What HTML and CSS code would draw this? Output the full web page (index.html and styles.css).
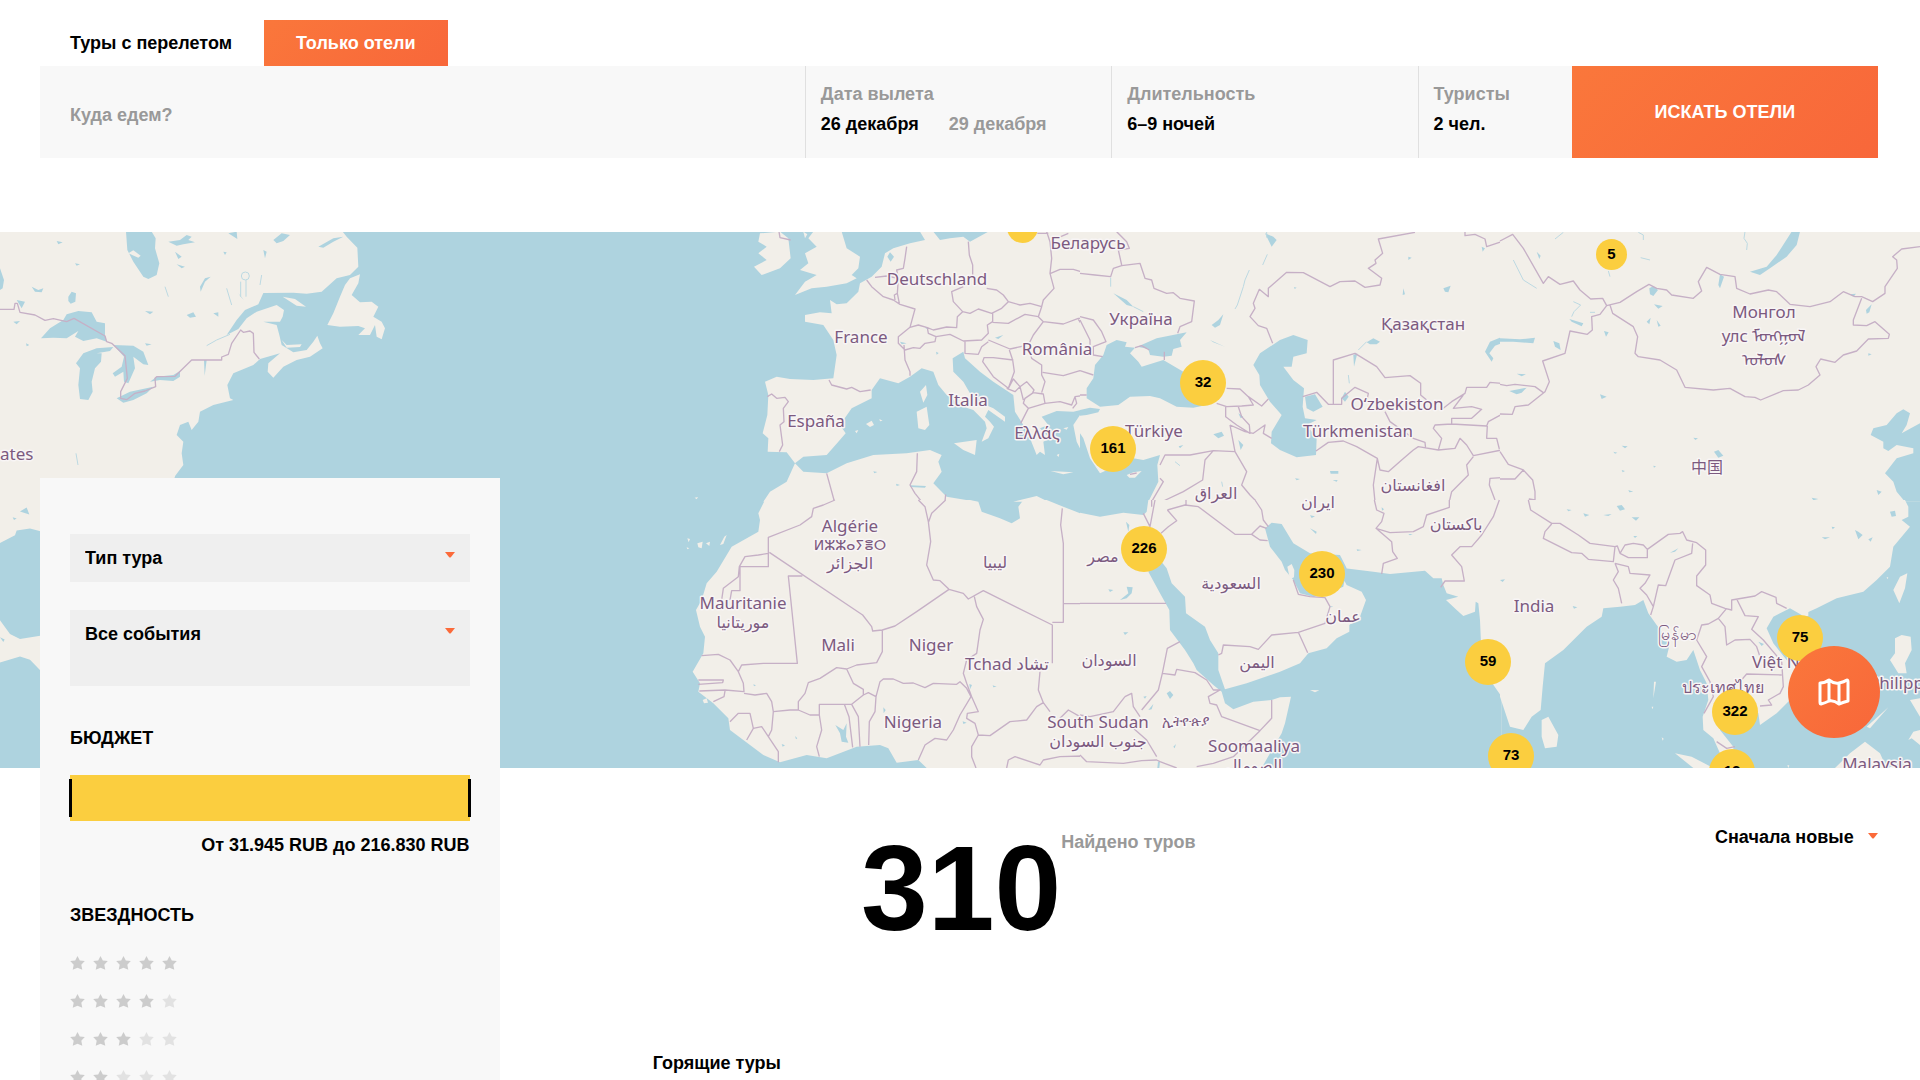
FILE: index.html
```html
<!DOCTYPE html>
<html lang="ru">
<head>
<meta charset="utf-8">
<meta name="viewport" content="width=device-width, initial-scale=1">
<title>Только отели</title>
<link rel="stylesheet" href="styles.css">
</head>
<body>
<svg class="defs" aria-hidden="true">
  <symbol id="star" viewBox="0 0 15 14" preserveAspectRatio="none"><path d="M7.5 0 9.8 4.6 14.8 5.1 11.3 8.8 12.3 13.8 7.5 11.8 2.7 13.8 3.7 8.8 .2 5.1 5.2 4.6Z"/></symbol>
  <symbol id="caret" viewBox="0 0 10 6"><path d="M0 0H10L6 5Q5 6 4 5Z"/></symbol>
</svg>

<header class="search">
  <nav class="tabs">
    <a class="tab" href="#tours">Туры с перелетом</a>
    <a class="tab tab-active" href="#hotels">Только отели</a>
  </nav>
  <form class="search-form">
    <input class="destination" type="text" placeholder="Куда едем?" aria-label="Куда едем?">
    <div class="field">
      <span class="field-label">Дата вылета</span>
      <span class="field-values"><button type="button" class="value">26 декабря</button><button type="button" class="value value-muted">29 декабря</button></span>
    </div>
    <div class="field">
      <span class="field-label">Длительность</span>
      <span class="field-values"><button type="button" class="value">6–9 ночей</button></span>
    </div>
    <div class="field">
      <span class="field-label">Туристы</span>
      <span class="field-values"><button type="button" class="value">2 чел.</button></span>
    </div>
    <button class="submit" type="submit">ИСКАТЬ ОТЕЛИ</button>
  </form>
</header>

<section class="map" aria-label="Карта">
<svg class="map-canvas" viewBox="0 0 1920 536" preserveAspectRatio="xMidYMid slice">
  <!-- North America -->
  <g transform="translate(0 -7) scale(.33333)">
    <path class="land" d="M0 20H1028L1040 35 1072 68 1075 125 1050 150 1010 160 965 200 920 206 880 203 790 204 775 238 735 255 710 285 680 330 715 312 740 280 770 260 830 240 852 255 848 275 840 290 790 290 830 300 838 330 845 360 880 382 920 375 940 350 952 332 960 355 968 370 930 395 890 405 850 425 820 458 803 440 805 415 840 385 780 402 760 420 700 445 682 480 690 520 700 525 640 540 600 560 595 590 575 615 565 590 540 600 530 630 550 650 545 685 550 720 520 760 515 780H0Z"/>
    <path class="land" d="M1080 148 1050 160 1035 180 1020 215 1000 265 982 300 1020 305 1075 303 1095 310 1075 330 1110 330 1125 300 1130 335 1145 343 1155 310 1145 290 1120 275 1135 245 1115 230 1080 232 1055 210 1075 175ZM848 215 885 222 918 245 890 242ZM845 345 860 360 905 358 900 366 860 368Z"/>
    <path class="water" d="M378 20 382 75 400 110 430 155 445 162 470 150 478 115 465 70 467 40 455 20ZM123 340 150 310 190 285 200 268 235 258 275 262 290 290 315 295 315 330 320 350 290 340 250 348 225 335 235 318 200 340 160 338ZM228 415 250 385 290 370 340 366 330 378 290 385 305 385 303 410 285 430 275 470 278 500 265 525 240 522 235 480 240 430ZM340 360 400 362 430 380 445 420 430 418 400 395 405 430 385 475 372 470 370 440 345 455 338 445 365 425 372 395ZM350 520 390 500 460 485 440 505 400 525 370 533ZM450 470 470 455 520 450 540 438 540 455 520 468 480 465ZM0 130 12 165 8 190 0 195ZM205 215 215 200 228 205 226 230 212 236 205 228ZM600 185 615 160 632 155 615 170 602 200ZM640 265 655 262 655 275ZM560 270 580 262 588 275 570 278ZM505 50 540 45 560 30 575 35 565 45 585 52 550 58 530 62ZM820 45 845 25 870 30 850 48 830 55ZM955 65 1000 40 1030 35 1000 50 970 68ZM685 25 710 20 712 42ZM525 80 545 95 535 102ZM530 118 555 125 545 130ZM435 258 460 260 450 268ZM790 75 800 80 795 100ZM170 48 188 52 175 58ZM50 225 75 230 65 250ZM40 290 60 288 50 298ZM225 115 240 118 230 122ZM95 185 115 195 130 190 125 202 105 200ZM435 355 455 358 440 362ZM78 355 88 360 80 364ZM612 405 620 405 614 452ZM670 80 680 82 675 90ZM715 205 732 225 722 215Z"/>
    <path class="river" d="M738 165V215M722 170V215M620 362 650 345 690 328M680 190 695 240M495 185 505 215M785 150 780 180M228 685 234 720"/>
    <circle class="river" cx="736" cy="153" r="12"/>
    <path class="land" d="M385 85 400 76 422 92 415 98Z"/>
    <path class="border" d="M0 253H42L45 235 52 235 60 262 105 270 135 286 160 281 200 290 222 280 315 333 320 350 335 355 375 392 382 460 362 500 362 520 380 524 405 505 435 498 467 485 465 460 470 455 525 454 575 405H665V396L685 388 695 355 722 315 730 322 750 318 760 325 762 382 778 402"/>
  </g>
  <g transform="translate(0 228) scale(.33333 .3954)">
    <path class="land" d="M0 20H530L520 60H130V182L90 173 50 178 45 190 0 210ZM0 405 30 440 60 453 130 443V540L90 505 60 497 0 512Z"/>
    <path class="water" d="M60 130 80 120 88 138ZM38 145 50 148 42 152ZM0 448 14 454 10 460Z"/>
  </g>
  <!-- Europe and the western Mediterranean -->
  <g transform="translate(680 -7) scale(.33333)">
    <path class="land" d="M240 25 300 20 325 40 332 100 300 130 245 150 222 125 260 105 235 85 260 65 235 50ZM400 20H485L500 70 540 95 535 130 515 150 530 160 500 175 440 185 395 190 345 210 375 170 410 150 360 135 385 115 375 85 410 65 385 40ZM370 20 382 28 375 40Z"/>
    <path class="land" d="M1265 20H925L870 50 850 35 810 40 780 45 760 20H720L735 45 690 55 640 70 615 85 605 125 575 155 540 175 535 200 500 235 470 238 450 225 455 265 420 262 375 270 375 290 430 300 460 345 470 390 460 460 400 465 330 462 290 455 255 470 265 510 262 570 248 625 265 640 263 680 320 682 345 715 370 695 440 690 475 650 497 625 480 600 515 550 575 520 575 495 600 460 655 475 690 455 725 430 760 440 775 480 800 510 850 545 880 555 915 590 920 610 905 650 925 640 942 605 930 590 915 575 925 555 975 590 975 575 940 550 905 535 870 505 850 470 820 440 818 400 850 380 855 400 900 440 940 470 1000 510 1005 560 1030 600 1050 640 1070 690 1080 680 1095 690 1090 650 1110 640 1080 610 1105 600 1085 575 1130 558 1180 560 1230 548 1265 548V540L1235 515 1220 490 1240 450 1245 420 1265 410Z"/>
    <path class="land" d="M1265 570H1200L1180 600 1190 650 1210 690 1265 715ZM822 655 890 645 885 690 850 675ZM710 560 740 545 748 600 735 615 715 610ZM720 500 738 480 742 510 730 533ZM1112 738 1180 742 1150 748ZM558 597 575 587 582 600 570 606ZM598 582 608 587 600 589ZM525 618 535 615 530 625ZM1190 600 1182 605 1190 612ZM1130 690 1138 686 1136 696ZM1150 610 1165 606 1160 614ZM1215 712 1228 706 1222 716ZM44 818 54 816 50 823Z"/>
    <path class="land" d="M250 830 270 800 320 770 345 715 370 740 440 745 500 715 580 690 680 685 750 675 785 690 775 710 785 740 760 775 800 815 890 830ZM1000 830 1070 813 1105 830Z"/>
    <path class="water" d="M945 338 970 330 955 342ZM660 350 680 355 665 358ZM735 305 748 310 738 311ZM630 82 642 95 632 110 622 95ZM648 776 660 780 650 783ZM768 380 776 384 770 389ZM690 781 738 783 735 788 690 786ZM580 739 592 741 583 745Z"/>
    <path class="border" d="M297 20 300 38 332 45M262 515 275 507 290 520 315 517 325 530 310 550 312 590 300 600 308 660 298 680M447 465 455 480 500 492 515 487 540 500 572 495M560 165 575 185 610 215 640 225 660 238 705 252 690 307M585 157 620 153 655 160 650 135 670 130 675 100 680 65M655 160 652 205 658 235M652 205 643 210 645 225M690 307 655 335 655 355 675 375 700 368 720 370 735 355 765 350 768 335 745 325 742 308 715 300 690 307M672 360 675 405 690 440 690 452M742 308 760 315 800 306 830 308 832 275 848 260 820 230 815 200 850 185M865 50 868 90 878 120 878 150M920 190 950 195 970 210 985 230 965 250 935 265 895 252 870 265 848 260M768 335 810 328 850 348 905 345 925 325 922 300 938 290 938 265M985 230 1020 240 1050 235 1085 245 1075 275 1035 268 985 295 938 292M1075 275 1090 290 1060 330 1045 360 990 372 925 345M855 348 855 385 895 388 905 365 925 350M1000 405 940 398 912 398 908 410 940 455 985 490 1003 440 998 405 988 375M1045 360 1055 400 1085 420 1085 450 1095 470 1085 503M1088 442 1150 452 1200 437 1240 450M1095 535 1140 530 1175 540 1185 515 1222 510M1185 515 1190 535 1178 550M1035 520 1060 503 1090 507 1095 535 1045 550 1030 535ZM1020 485 1040 470 1062 495 1058 503M985 490 1000 462 1020 485 1030 525M980 490 1005 500 1020 485M1045 550 1022 595M1100 20 1110 50 1115 100 1110 145 1122 190 1090 225 1085 245M1112 145 1140 133 1180 133 1220 145 1265 152M1072 25H1105M1130 40 1165 25M1090 290 1150 297 1195 280 1240 280 1265 290M1195 283 1225 330 1232 360M1265 350 1240 385 1245 395M712 685 710 740 690 780 705 805 725 830M440 745 462 825 430 840M797 808 795 830"/>
  </g>
  <!-- Black Sea to Central Asia -->
  <g transform="translate(1080 -7) scale(.33333)">
    <path class="land" d="M0 20H1265V830H0Z"/>
    <path class="water" d="M45 420 70 390 80 360 110 345 140 352 135 365 165 368 150 385 175 410 185 425 250 405 310 440 315 500 380 540 340 548 290 545 240 520 210 513 150 515 115 540 60 545 20 520 20 490 40 460ZM172 365 230 340 320 322 300 345 305 365 280 372 275 392 250 395 210 390 205 372ZM0 625 10 640 30 700 60 745 160 700 190 705 240 690 232 720 235 770 205 830H0ZM0 555 30 548 60 552 55 562 20 570 0 572Z"/>
    <path class="water" d="M520 420 540 385 600 345 640 330 683 345 680 385 640 395 635 425 610 425 640 465 672 490 668 545 675 580 710 585 680 600 710 640 708 690 650 697 600 675 573 655 575 620 605 570 570 530 540 480 538 450ZM675 515 705 508 728 545 700 560 680 550ZM1265 336 1230 350 1215 380 1235 410 1240 400 1228 385 1245 362 1265 355ZM860 352 880 340 900 350 890 358 870 358ZM820 390 832 385 822 425ZM785 520 795 500 806 515 795 530ZM1090 190 1112 182 1105 202 1095 200ZM395 300 415 285 430 268 420 300 405 308ZM100 205 140 225 160 245 140 240ZM400 628 425 620 432 632 415 640ZM475 565 490 575 482 580ZM475 645 490 660 482 675ZM645 760 660 762 650 766ZM750 738H775V746H752ZM985 95 995 98 985 105ZM1205 65 1215 70 1208 80ZM555 25 580 35 590 45 575 65 565 45ZM390 345 435 365 400 352ZM970 190 975 208 968 210ZM296 664 310 660 300 670ZM758 766 773 765 770 770ZM642 186 650 188 644 192Z"/>
    <path class="river" d="M562 88 548 120M508 135 495 165 490 185 472 240 465 252M92 158V185M160 245 190 260M560 20V38M425 770 428 785M805 450 808 475M835 375 860 350M285 710 300 722"/>
    <path class="land" d="M140 750 160 742 185 738 165 758 148 758Z"/>
    <path class="border" d="M110 20 140 50 148 70 115 75 125 120M0 145 45 150 92 155 100 130 125 122 180 115 195 160 215 165 222 190 260 205 280 203 300 220 343 228 335 290 300 305 293 325M0 275 40 285 65 320 78 350 40 365 40 390 68 395M0 285 30 345 30 360M0 437 40 450M0 510H20M253 380V405M165 368 185 362 208 375M1005 22 895 42 908 85 885 105 888 115 865 130 905 160 900 180 855 187 825 168 780 170 750 185 670 143 620 142 565 190 565 215 538 193 520 235 525 250 510 275 535 302 560 310 578 355M1155 20V32L1185 28 1215 42 1220 65 1265 50M668 515 710 502 745 538H785V520L825 487 865 505 860 530M760 538V405L825 385 890 425 915 458 990 452 1022 475V510L1040 525M915 560 930 590 1000 640 1035 652 1037 670M708 678 745 652 790 648 830 665 892 700 900 735 925 740 965 705 1000 675 1015 665 1075 675 1085 640 1060 610 1065 600 1115 597 1220 603M1087 552 1115 530 1155 505 1160 487 1220 487 1230 472 1265 475M1150 510 1120 550 1175 545 1205 553 1175 580 1115 580 1115 597M1220 603 1225 590 1265 568M1222 603 1220 640 1250 640 1258 672M1075 675 1125 670 1140 640 1160 660 1180 692 1265 675M1180 695 1160 720 1165 750 1130 785 1115 800 1108 830M892 700 880 780 885 830M440 490 480 492 505 515 545 543 565 522M410 535 440 545 485 543 520 540 505 515M437 545V575L470 600 510 625 508 600 485 575 475 545M450 600 495 620 520 625 555 600 550 625 575 640M240 720 255 690 330 690 400 677 465 680 450 600M465 680 500 740 485 780 510 810 540 840M400 677 375 705 368 765 310 800 225 840M240 760 250 770 215 830M1265 758 1230 760 1228 780 1245 825M150 748 170 744"/>
  </g>
  <!-- Mongolia and China -->
  <g transform="translate(1500 -7) scale(.33333)">
    <path class="land" d="M0 20H1260V830H0Z"/>
    <path class="water" d="M1260 595 1205 625 1220 600 1230 565 1210 553 1190 565 1160 600 1120 610 1112 630 1150 650 1150 670 1165 678 1190 660 1240 670 1240 685 1190 700 1155 745 1180 770 1190 800 1215 830H1260ZM875 20H900L890 60 860 95 810 130 780 150 750 140 800 125 830 90ZM660 148 672 155 660 190 655 180ZM448 190 460 183 474 195 460 213 450 208ZM0 340 60 343 105 338 100 355 40 350 0 350ZM160 348 178 355 182 375 165 365ZM208 282 250 295 245 304 215 290ZM28 498 80 488 65 503 50 508ZM462 238 488 243 475 251ZM440 290 452 278 448 298ZM470 285 482 302 475 305ZM642 680 655 675 670 692 655 698ZM300 508 320 515 305 522ZM312 318 326 322 318 335ZM50 446 78 448 65 454ZM365 662 383 664 375 670ZM580 638 594 640 586 645ZM110 80 122 92 118 102ZM1098 255 1115 238 1108 262 1100 266ZM1050 208 1068 206 1060 215ZM1130 795 1145 800 1135 810ZM385 795 400 800 388 802ZM935 818 955 822 940 826ZM1105 385 1115 388 1105 392ZM340 680 352 683 345 686ZM365 735 375 738 368 742ZM460 722 468 724 462 728Z"/>
    <path class="river" d="M165 42 190 22M415 22 430 30V45M735 20 732 40 742 55 740 75M220 230 242 240 222 260 215 275M422 98 450 105M325 138 330 155M40 105 70 165 110 190M270 262H285"/>
    <path class="border" d="M0 48 38 28 70 70 130 175 145 155 180 178 220 168 240 195 272 222 308 220 320 242 300 268 275 275 277 315 262 328 210 318 195 385 128 408 148 470 135 500 85 540 45 545 37 568 0 567M0 478 20 482 45 478 105 485 130 503M320 242 360 232 410 200 447 178 470 190 500 195 515 210 580 220 605 198 595 170 620 127 660 148 705 155 710 190 750 207 805 195 830 200 870 238 930 245 990 230 1030 200 1065 215 1085 215 1118 230 1155 205 1155 185 1192 130 1190 105 1178 95 1205 72 1260 65M330 240 338 265 400 305 413 335 405 385 415 395 480 405 530 435 555 487 640 495 690 490 735 515 765 517 782 525 850 497 895 495 925 480 960 450 948 425 962 402 1005 412 1030 390 1070 378 1105 342 1165 340 1168 328 1125 290 1100 302 1060 300 1060 285 1085 220M0 680 25 718 70 735 98 765 105 800V825L88 822 90 835M70 735 45 762 0 762"/>
  </g>
  <!-- West and Central Africa -->
  <g transform="translate(680 268) scale(.33333)">
    <path class="land" d="M255 0H870L895 5 905 35 960 55 995 70 1020 55 1015 20 1030 0H1100L1150 20 1200 40 1265 50V804H740L715 780 650 788 625 745 600 735 530 740 440 775 380 765 300 787 250 765 190 720 150 690 145 655 100 610 55 575 60 550 38 515 70 460 75 410 60 380 48 330 65 300 80 250 110 215 155 140 235 95 240 60 235 40Z"/>
    <path class="land" d="M52 130 68 125 65 145 55 142ZM78 130 90 125 88 138ZM120 135 133 110 140 105 130 132ZM22 115 30 117 26 127ZM20 142 28 145 22 148ZM68 600 80 595 84 608 72 610Z"/>
    <path class="water" d="M466 675 490 690 500 670 498 710 505 728 485 725 480 700ZM868 552 876 555 870 568ZM938 556 950 560 940 562ZM345 708 352 715 348 718ZM305 732 315 736 308 740ZM610 622 617 630 611 640ZM220 553 228 556 222 559ZM848 664 860 668 850 672Z"/>
    <path class="border" d="M465 0 430 15 400 25 395 50 360 75 265 112V200H180V272H155L150 300M265 160 235 165 195 170 178 200 175 230 130 265 125 300M268 157 548 345 575 380 578 393 607 390 645 378 710 335 807 268M367 228H325L352 490H250L185 495 175 515 150 480 115 463 65 467M607 390V455L590 488 530 495 500 507 470 503 420 535 385 548 375 580 355 605 355 630M500 507 520 550 550 568 550 585 515 613H418V645M550 585 565 578 588 590 600 545 610 537 640 537 670 550 700 549 735 563 760 550 830 553 840 545 860 565 873 590 840 645 820 690 800 720 765 715 735 735 715 780M588 590 585 635 568 665 566 735M515 613 535 650 540 740M493 613 507 650 518 742M418 645 425 690 410 740 418 770M175 515 190 550 192 575 135 570 58 573M192 580 225 585 260 580 275 605 280 635 330 630 355 630 390 645 418 645M280 635 275 690 265 710 245 680 220 685 200 720M150 665 175 640 210 640 220 685M265 710 295 755 295 787M135 573 132 590 100 605M55 540 130 540 128 548 55 553M715 0 735 20 745 65 752 125 740 195 760 240 780 242 807 268 850 280 865 297 910 272 1117 375V490M797 0 755 40 745 68M1147 25 1142 75 1150 130V367H1117M1150 311H1265M883 290 890 320 910 358 900 390 890 460 860 480 850 520 860 550 875 590 895 635 862 640 860 655 885 670 895 705 875 740 875 770 888 804M895 705 930 707 990 665 1040 660 1070 620 1090 608 1110 635M1080 515 1075 570 1090 608M980 804 985 780 1005 770 1080 795 1090 780 1140 770 1210 768 1230 790M1140 655 1165 630 1200 650 1265 650"/>
  </g>
  <!-- Arabian Peninsula and East Africa -->
  <g transform="translate(1080 268) scale(.33333)">
    <path class="land" d="M0 0H1265V804H0Z"/>
    <path class="water" d="M0 0H205L200 35 190 45 130 38 60 50 0 38ZM205 215 240 180 260 205 275 250 315 290 318 340 375 380 390 420 415 460 415 510 435 568 500 550 600 515 660 490 685 460 740 445 770 415 808 395 808 375 840 350 858 300 845 275 800 255 770 200 795 205 880 215 930 222 1035 212 1060 235 1085 235 1090 255 1100 280 1135 290 1098 300 1130 330 1150 348 1185 335 1187 305 1195 310 1200 360 1203 430 1230 540 1265 590V804H545L570 760 605 700 615 670 633 590 600 592 575 600 520 605 460 628 435 610 425 575 400 555 350 510 340 490 315 450 270 390 268 330 240 280ZM555 85 575 68 605 72 640 130 690 160 780 165 800 205 790 260 740 280 700 290 660 280 640 240 615 210 605 185 570 140Z"/>
    <path class="land" d="M622 200 635 192 643 210 642 232 630 238ZM690 570 718 571 705 577Z"/>
    <path class="water" d="M260 580 270 573 280 585 270 597ZM140 260 158 262 155 280 140 295 120 300 145 280ZM85 268 100 270 90 276ZM138 65 148 75 145 95ZM690 46 705 49 695 54ZM690 85 710 95 708 102ZM905 22 912 28 906 32ZM130 397 145 397 135 405ZM234 785 240 785 238 804 232 804ZM280 740 288 732 284 745ZM190 590 200 588 195 596ZM205 630 220 612 215 628ZM750 318 760 320 752 322ZM830 148 845 150 832 153ZM985 102 998 102 990 106Z"/>
    <path class="border" d="M0 310H258M190 40 210 80 225 0M215 20V0M262 30 315 15 355 20 465 103 515 103 540 78 560 85M262 30 290 62 265 80 243 100M515 103 540 120 563 122M318 0V15M525 0 545 30 550 60 565 80M640 240 655 283 690 290 735 293 750 320 735 370 655 397 575 405 535 448 510 440 430 435 425 460 415 465M655 397 683 458M883 0 890 30 912 40 905 65 888 85 935 125 938 155 952 175 910 190 905 222M888 85 930 98 1000 95 1030 80 1040 45 1108 22V0M1258 0 1240 50 1205 105 1175 140 1140 140 1115 165 1145 200 1153 243 1095 243 1082 262M300 425 262 445 247 520 285 525 290 508 345 518 380 540 400 570 420 570 385 590 390 610 410 615 425 650 540 692 575 655V600M247 520 235 570 185 630M540 692 460 770 400 790 350 800M135 590 155 580 160 620 180 650M0 645 30 650 100 635 135 590M0 765 20 785 130 790 185 782 230 780 240 785 290 804M155 680 200 720 230 770"/>
  </g>
  <!-- India and South-East Asia -->
  <g transform="translate(1500 268) scale(.33333)">
    <path class="land" d="M0 0H1215L1225 20 1225 50 1205 60 1230 80 1180 140 1170 200 1130 240 1090 275 1010 295 950 325 905 345 870 325 820 350 800 385 820 430 860 480 890 500 900 560 870 600 830 640 780 675 775 640 750 620 700 610 660 660 660 690 700 740 700 770 660 760 640 715 610 690 608 650 625 600 620 550 600 510 580 450 560 480 530 485 500 470 510 430 470 375 445 340 430 300 405 315 360 320 310 325 305 350 260 380 190 450 135 490 128 560 122 630 95 650 70 690 30 680 0 590Z"/>
    <path class="land" d="M125 660 145 650 175 705 170 740 135 745 125 710ZM1180 270 1200 230 1222 220 1215 265 1198 310ZM905 330 925 330 925 348 905 350ZM1185 415 1205 405 1232 410 1235 450 1215 490 1220 520 1195 520 1170 480 1185 460ZM525 760 575 770 640 804H580ZM1005 804 1050 760 1095 725 1140 760 1160 804ZM1100 680 1165 622 1110 685ZM1230 600 1260 595V650ZM1225 720 1240 695 1260 690V735L1235 715ZM1170 545 1185 560 1175 565ZM462 545 468 545 460 595ZM455 620 460 620 457 628ZM485 712 491 716 488 722ZM862 796 868 796 865 804ZM1160 232 1165 232 1162 238Z"/>
    <path class="water" d="M350 18 365 15 375 28 360 32ZM395 52 418 52 408 62ZM1065 90 1075 95 1088 105 1075 118ZM1170 35 1185 32 1188 48 1175 50ZM310 45 335 42 325 48ZM200 28 215 30 205 34ZM250 40 268 45 255 50ZM400 108 412 108 405 114ZM995 80 1005 82 998 88ZM965 112 990 112 975 118ZM218 318 232 322 222 326ZM0 240 15 238 8 246ZM510 158 535 145 525 155ZM775 425 792 432 785 438ZM1105 118 1118 112 1112 125Z"/>
    <path class="border" d="M85 0 92 30 155 70H180L235 105 270 130 345 140 340 185 265 178 245 160 215 158 130 115 135 95 155 72M345 140 352 138 360 160 375 135 400 130 430 135 442 148V173H385L360 160M442 148 505 103 540 100 548 95 560 120 590 128 617 150V195L590 228V257L630 285 635 310 675 325 695 330 695 300 765 288 785 275 828 292 830 310 860 325M345 190 385 200 390 220 450 225 435 250 420 265 440 285 460 320 452 345M345 190 355 215 340 240 355 265 365 310M460 320 475 255 497 257 525 180 575 160 578 130M710 297 735 347 775 350 755 388 790 420 845 485 850 560 840 580 805 600 815 615 780 618M680 325 655 355 625 372 605 375 590 420 620 470 605 500 630 545 640 590 612 640M655 355 675 380 680 435 705 420 750 418 770 440 780 470M845 525 740 522 720 545M650 725 680 745 705 740"/>
  </g>
  <g class="country">
    <text class="start" x="0" y="228">ates</text>
    <text x="1088" y="17">Беларусь</text>
    <text x="937" y="53">Deutschland</text>
    <text x="861" y="111">France</text>
    <text x="1057" y="123">România</text>
    <text x="968" y="174">Italia</text>
    <text x="816" y="195">España</text>
    <text x="1037" y="207">Ελλάς</text>
    <text x="1141" y="93">Україна</text>
    <text x="1423" y="98">Қазақстан</text>
    <text x="1397" y="178">Oʻzbekiston</text>
    <text x="1154" y="205">Türkiye</text>
    <text x="1358" y="205">Türkmenistan</text>
    <text class="script" x="1413" y="259">افغانستان</text>
    <text class="script" x="1216" y="267">العراق</text>
    <text class="script" x="1318" y="276">ایران</text>
    <text class="script" x="1456" y="298">باكستان</text>
    <text x="1764" y="86">Монгол</text>
    <text x="1764" y="110">улс ᠮᠣᠩᠭᠣᠯ</text>
    <text x="1764" y="134">ᠤᠯᠤᠰ</text>
    <text class="script" x="1707" y="241">中国</text>
    <text x="850" y="300">Algérie</text>
    <text class="compact" x="850" y="318">ⵍⵣⵣⴰⵢⴻⵔ</text>
    <text class="script" x="850" y="337">الجزائر</text>
    <text x="743" y="377">Mauritanie</text>
    <text class="script" x="743" y="396">موريتانيا</text>
    <text class="script" x="995" y="336">ليبيا</text>
    <text x="838" y="419">Mali</text>
    <text x="931" y="419">Niger</text>
    <text x="1007" y="438">Tchad تشاد</text>
    <text x="913" y="496">Nigeria</text>
    <text x="1098" y="496">South Sudan</text>
    <text class="script" x="1098" y="515">جنوب السودان</text>
    <text class="script" x="1109" y="434">السودان</text>
    <text class="script" x="1103" y="330">مصر</text>
    <text class="script" x="1231" y="357">السعودية</text>
    <text class="script" x="1343" y="390">عمان</text>
    <text class="script" x="1257" y="436">اليمن</text>
    <text class="compact" x="1185" y="494">ኢትዮጵያ</text>
    <text x="1254" y="520">Soomaaliya</text>
    <text class="script" x="1254" y="539">الصومال</text>
    <text x="1534" y="380">India</text>
    <text class="script" x="1677" y="408">မြန်မာ</text>
    <text class="script" x="1723" y="461">ประเทศไทย</text>
    <text class="start" x="1752" y="436">Việt Nam</text>
    <text class="start" x="1869" y="457">Philippines</text>
    <text x="1877" y="538">Malaysia</text>
  </g>
</svg>
<button class="pin pin-small" style="--x:62px;--y:-5px" aria-label="Кластер"></button>
<button class="pin pin-small" style="--x:651px;--y:22px">5</button>
<button class="pin" style="--x:243px;--y:151px">32</button>
<button class="pin" style="--x:153px;--y:217px">161</button>
<button class="pin" style="--x:184px;--y:317px">226</button>
<button class="pin" style="--x:362px;--y:342px">230</button>
<button class="pin" style="--x:528px;--y:430px">59</button>
<button class="pin" style="--x:551px;--y:524px">73</button>
<button class="pin" style="--x:840px;--y:406px">75</button>
<button class="pin" style="--x:775px;--y:480px">322</button>
<button class="pin" style="--x:772px;--y:540px">12</button>
<button class="map-toggle" aria-label="Показать карту">
  <svg viewBox="0 0 32 28" width="32" height="28"><path d="M2 5Q7 5 11 2Q16 6 21 5Q26 4 29 2Q30 2 30 4V23Q26 24 21 26Q16 22 11 23Q7 25 3 26Q2 26 2 24ZM11 2V23M21 5V26"/></svg>
</button>
</section>

<main class="results">
  <aside class="filters">
    <div class="select-box">
      <select aria-label="Тип тура"><option>Тип тура</option></select>
      <svg class="caret"><use href="#caret"/></svg>
    </div>
    <div class="select-box select-tall">
      <select aria-label="Все события"><option>Все события</option></select>
      <svg class="caret"><use href="#caret"/></svg>
    </div>
    <h2 class="filter-title">БЮДЖЕТ</h2>
    <div class="budget">
      <input type="range" min="31945" max="216830" value="31945" aria-label="Бюджет от">
      <input type="range" min="31945" max="216830" value="216830" aria-label="Бюджет до">
    </div>
    <p class="budget-text">От 31.945 RUB до 216.830 RUB</p>
    <h2 class="filter-title">ЗВЕЗДНОСТЬ</h2>
    <div class="ratings">
      <label class="stars"><input type="checkbox" aria-label="5 звёзд"><svg><use href="#star"/></svg><svg><use href="#star"/></svg><svg><use href="#star"/></svg><svg><use href="#star"/></svg><svg><use href="#star"/></svg></label>
      <label class="stars"><input type="checkbox" aria-label="4 звезды"><svg><use href="#star"/></svg><svg><use href="#star"/></svg><svg><use href="#star"/></svg><svg><use href="#star"/></svg><svg class="off"><use href="#star"/></svg></label>
      <label class="stars"><input type="checkbox" aria-label="3 звезды"><svg><use href="#star"/></svg><svg><use href="#star"/></svg><svg><use href="#star"/></svg><svg class="off"><use href="#star"/></svg><svg class="off"><use href="#star"/></svg></label>
      <label class="stars"><input type="checkbox" aria-label="2 звезды"><svg><use href="#star"/></svg><svg><use href="#star"/></svg><svg class="off"><use href="#star"/></svg><svg class="off"><use href="#star"/></svg><svg class="off"><use href="#star"/></svg></label>
    </div>
  </aside>
  <section class="list">
    <div class="list-head">
      <p class="count"><strong>310</strong><span>Найдено туров</span></p>
      <div class="sort">
        <select aria-label="Сортировка"><option>Сначала новые</option></select>
        <svg class="caret"><use href="#caret"/></svg>
      </div>
    </div>
    <h2 class="list-title">Горящие туры</h2>
  </section>
</main>
</body>
</html>
```
FILE: styles.css
```css
* { box-sizing: border-box; }

html { height: 100%; }

body {
  margin: 0;
  height: 100%;
  overflow-x: hidden;
  overflow-y: auto;
  scrollbar-width: none;
  background: #fff;
  color: #000;
  font: bold 18px/24px "Liberation Sans", Arial, sans-serif;
}

button, input, select {
  font: inherit;
  color: inherit;
  border: 0;
  padding: 0;
  margin: 0;
  background: none;
  border-radius: 0;
}

h2, p { margin: 0; font-size: inherit; }

.defs { position: absolute; width: 0; height: 0; }

/* Search bar */
.search { padding: 20px 42px 74px 40px; }

.tabs { display: flex; gap: 2px; }

.tab {
  padding: 11px 30px;
  color: #000;
  text-decoration: none;
}

.tab-active { padding: 11px 32px; }

.tab-active, .submit, .map-toggle {
  background: linear-gradient(135deg, #fa773b, #f8673a);
  color: #fff;
}

.search-form {
  display: grid;
  grid-template-columns: 5fr 2fr 2fr 1fr 2fr;
  min-height: 92px;
  background: #f8f8f8;
}

.destination { padding: 6px 30px 0; outline: 0; min-width: 0; }
.destination::placeholder { color: #999; opacity: 1; }

.field {
  display: flex;
  flex-direction: column;
  gap: 6px;
  padding: 16px 0 0 15px;
  min-width: 0;
}

.field-label, .value-muted { color: #999; }
.destination, .field:not(:nth-child(4)) { border-right: 1px solid #e0e0e0; }
.field-values { display: flex; gap: 30px; }
.value { white-space: nowrap; }
.submit { text-align: center; }

/* Map */
.map {
  position: relative;
  height: 536px;
  overflow: hidden;
  background: #aed3df;
}

.map-canvas { display: block; width: 100%; height: 100%; }
.land { fill: #f2efe9; }
.water { fill: #aed3df; }
.river { fill: none; stroke: #bcd9e2; stroke-width: 3; }
.border { fill: none; stroke: #c6b0c6; stroke-width: 4; stroke-linejoin: round; }

.country text {
  font: 17px "Noto Sans", "Noto Sans CJK SC", "DejaVu Sans", sans-serif;
  fill: #7c5a80;
  stroke: #f8f5f5;
  stroke-width: 3px;
  stroke-linejoin: round;
  paint-order: stroke;
  text-anchor: middle;
}

.country .start { text-anchor: start; }
.country .script { font-size: 16px; }
.country .compact { font-size: 14px; }

.pin {
  position: absolute;
  left: calc(50% + var(--x));
  top: var(--y);
  width: 46px;
  height: 46px;
  margin: -23px 0 0 -23px;
  padding-bottom: 2px;
  border-radius: 50%;
  background: #fbce3f;
  font-size: 15px;
}

.pin-small { width: 31px; height: 31px; margin: -15px 0 0 -15px; }

.map-toggle {
  position: absolute;
  right: 40px;
  top: 414px;
  width: 92px;
  height: 92px;
  border-radius: 50%;
  display: grid;
  place-items: center;
}

.map-toggle path { fill: none; stroke: #fff; stroke-width: 3; stroke-linejoin: round; }

/* Results */
.results {
  display: grid;
  grid-template-columns: 3fr 1fr 8fr;
  padding: 0 42px 0 40px;
}

.filters {
  position: relative;
  grid-column: 1;
  margin-top: -290px;
  padding: 56px 30px 40px;
  background: #f8f8f8;
}

.select-box { position: relative; margin-bottom: 28px; background: #efefef; }
.select-tall { padding-bottom: 28px; margin-bottom: 40px; }

select { appearance: none; display: block; }
.select-box select { width: 100%; height: 48px; padding: 0 15px; }

.caret {
  position: absolute;
  right: 15px;
  top: 18px;
  width: 10px;
  height: 6px;
  fill: #fb6a3a;
  pointer-events: none;
}

.budget {
  position: relative;
  height: 46px;
  margin: 25px 0 12px;
  background: #fbce3f;
}

.budget input {
  position: absolute;
  left: -1px;
  top: 4px;
  width: calc(100% + 2px);
  height: 38px;
  appearance: none;
  pointer-events: none;
}

.budget input::-webkit-slider-thumb {
  appearance: none;
  width: 3px;
  height: 38px;
  background: #000;
  pointer-events: auto;
}

.budget-text { text-align: right; margin-bottom: 46px; }

.ratings { display: grid; gap: 24px; margin-top: 29px; }
.stars { display: flex; gap: 8px; }
.stars svg { width: 15px; height: 14px; fill: #ccc; }
.stars .off { fill: #e2e2e2; }
.stars input { position: absolute; opacity: 0; }

.list { grid-column: 3; padding-top: 60px; }
.list-head { display: flex; justify-content: space-between; align-items: flex-start; }
.count { display: flex; margin-left: 17%; }
.count strong { font-size: 120px; line-height: 120px; }
.count span { color: #999; padding-top: 2px; }

.sort { position: relative; margin-top: -3px; }
.sort select { height: 24px; padding-right: 24px; }
.sort .caret { right: 0; top: 8px; }

.list-title { margin-top: 103px; }
```
